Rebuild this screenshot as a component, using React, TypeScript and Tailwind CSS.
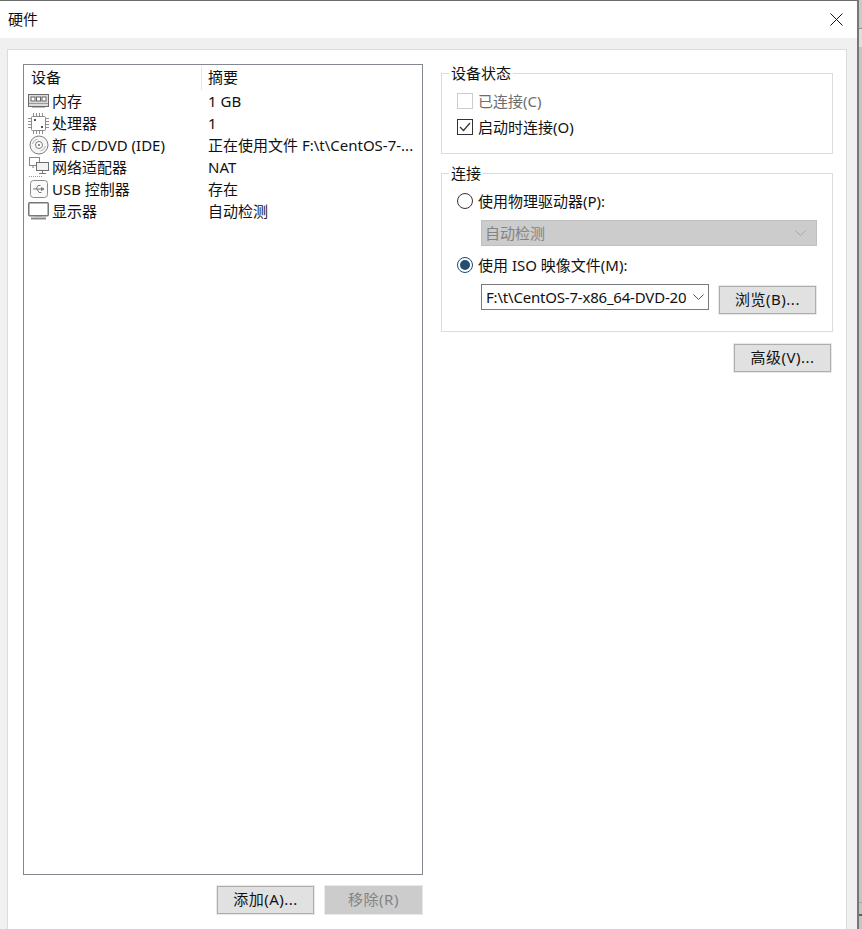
const font = "[font-family:'Noto_Sans','Noto_Sans_CJK_SC',sans-serif]";

function MemoryIcon() {
  return (
    <svg width="21" height="14" viewBox="0 0 21 14" fill="none">
      <rect x="0.5" y="0.5" width="20" height="12" fill="#dcdcdc" stroke="#6a6a6a" />
      <rect x="3" y="3" width="4" height="4" fill="#fff" stroke="#666" />
      <rect x="8.5" y="3" width="4" height="4" fill="#fff" stroke="#666" />
      <rect x="14" y="3" width="4" height="4" fill="#fff" stroke="#666" />
      <path d="M1 9.5h19" stroke="#9a9a9a" />
      <path d="M4 13.5h13" stroke="#bbb" />
    </svg>
  );
}

function CpuIcon() {
  return (
    <svg width="21" height="21" viewBox="0 0 21 21" fill="none">
      <rect x="3.5" y="3.5" width="14" height="14" rx="1" fill="#fff" stroke="#8a8a8a" />
      <path d="M5.5 0v3M8.5 0v3M11.5 0v3M14.5 0v3M5.5 18v3M8.5 18v3M11.5 18v3M14.5 18v3M0 5.5h3M0 8.5h3M0 11.5h3M0 14.5h3M18 5.5h3M18 8.5h3M18 11.5h3M18 14.5h3" stroke="#8f8f8f" />
      <rect x="6" y="6" width="2" height="2" fill="#555" />
      <rect x="13" y="13" width="2" height="2" fill="#555" />
    </svg>
  );
}

function DiscIcon() {
  return (
    <svg width="20" height="20" viewBox="0 0 20 20" fill="none">
      <circle cx="10" cy="10" r="9" fill="#f6f6f6" stroke="#7c7c7c" />
      <circle cx="10" cy="10" r="3.5" fill="#fff" stroke="#7c7c7c" />
      <circle cx="10" cy="10" r="1" fill="#666" />
      <path d="M3.5 9a6.5 6.5 0 0 1 5-5M16.5 11a6.5 6.5 0 0 1-5 5" stroke="#b5b5b5" />
    </svg>
  );
}

function NetworkIcon() {
  return (
    <svg width="21" height="20" viewBox="0 0 21 20" fill="none">
      <rect x="1.5" y="0.5" width="10" height="8" fill="#fff" stroke="#888" />
      <rect x="8.5" y="5.5" width="12" height="8" fill="#f2f2f2" stroke="#6f6f6f" />
      <path d="M14.5 14v2M11 16.5h7M5 9v2" stroke="#777" />
      <path d="M1 19.5h13" stroke="#999" strokeDasharray="1 1" />
    </svg>
  );
}

function UsbIcon() {
  return (
    <svg width="18" height="18" viewBox="0 0 18 18" fill="none">
      <rect x="0.5" y="0.5" width="17" height="17" rx="3" fill="#fafafa" stroke="#8a8a8a" />
      <path d="M3 9h11M14 9l-2.5-1.5v3zM6 9l2-3.5h2.5M7 9l2 3.5h2.5" stroke="#777" />
    </svg>
  );
}

function MonitorIcon() {
  return (
    <svg width="21" height="18" viewBox="0 0 21 18" fill="none">
      <rect x="0.75" y="0.75" width="19.5" height="13" rx="1" fill="#fff" stroke="#777" strokeWidth="1.5" />
      <path d="M3 16.5h15" stroke="#888" strokeWidth="2" />
      <path d="M7 14.5h7" stroke="#aaa" />
    </svg>
  );
}

const devices = [
  { icon: <MemoryIcon />, name: "内存", summary: "1 GB" },
  { icon: <CpuIcon />, name: "处理器", summary: "1" },
  { icon: <DiscIcon />, name: "新 CD/DVD (IDE)", summary: "正在使用文件 F:\\t\\CentOS-7-..." },
  { icon: <NetworkIcon />, name: "网络适配器", summary: "NAT" },
  { icon: <UsbIcon />, name: "USB 控制器", summary: "存在" },
  { icon: <MonitorIcon />, name: "显示器", summary: "自动检测" },
];

function Chevron({ color }: { color: string }) {
  return (
    <svg width="11" height="6" viewBox="0 0 11 6" fill="none">
      <path d="M0.5 0.5l5 5 5-5" stroke={color} />
    </svg>
  );
}

function Button({ label, disabled, className }: { label: string; disabled?: boolean; className: string }) {
  return (
    <div className={`h-[30px] w-[99px] bg-[#e9e9e9] p-[1px] ${className}`}>
      <div
        className={`flex h-full items-center justify-center border pb-[2px] tracking-[0.5px] ${
          disabled ? "border-[#cccccc] bg-[#cccccc] text-[#838383]" : "border-[#adadad] bg-[#e1e1e1] text-[#111]"
        }`}
      >
        {label}
      </div>
    </div>
  );
}

function Group({ title, className, children }: { title: string; className: string; children: React.ReactNode }) {
  return (
    <div className={`relative border border-[#dcdcdc] ${className}`}>
      <span className="absolute left-[7px] top-[-10px] bg-white px-[2px] leading-[18px]">{title}</span>
      {children}
    </div>
  );
}

export default function App() {
  return (
    <div className={`${font} flex h-[929px] w-[862px] overflow-hidden text-[15px] text-[#111]`}>
      <div className="w-[859px] shrink-0 border-r-2 border-[#777777] bg-white">
        <div className="flex h-[38px] items-center justify-between border-t border-[#6b6b6b] pl-2 pr-[14px]">
          <span>硬件</span>
          <svg width="13" height="13" viewBox="0 0 13 13" fill="none">
            <path d="M0.5 0.5l12 12M12.5 0.5l-12 12" stroke="#111" />
          </svg>
        </div>
        <div className="flex h-[891px] bg-[#f0f0f0] pl-[7px] pt-[11px]">
          <div className="flex h-[880px] w-[840px] border-x border-t border-[#dcdcdc] bg-white pl-[15px] pt-[14px]">
            <div className="w-[400px]">
              <div className="h-[811px] border border-[#828790]">
                <div className="flex h-[25px] items-center">
                  <div className="w-[177px] pl-[7px]">设备</div>
                  <div className="flex h-[24px] items-center border-l border-[#e5e5e5] pl-[6px]">摘要</div>
                </div>
                {devices.map((d) => (
                  <div key={d.name} className="flex h-[22px] items-center">
                    <div className="flex w-[177px] items-center">
                      <div className="flex w-[28px] shrink-0 justify-center pl-[1px]">{d.icon}</div>
                      <span className="whitespace-nowrap">{d.name}</span>
                    </div>
                    <div className="whitespace-nowrap pl-[7px]">{d.summary}</div>
                  </div>
                ))}
              </div>
              <div className="mt-[10px] flex justify-end gap-[9px]">
                <Button label="添加(A)..." className="" />
                <Button label="移除(R)" disabled className="" />
              </div>
            </div>
            <div className="ml-[18px] w-[392px] pt-[9px]">
              <Group title="设备状态" className="h-[81px] pt-[14px]">
                <div className="flex h-[26px] items-center pl-[15px] text-[#6d6d6d]">
                  <span className="mr-[5px] h-4 w-4 border border-[#cccccc]" />
                  已连接(C)
                </div>
                <div className="flex h-[26px] items-center pl-[15px]">
                  <span className="mr-[5px] flex h-4 w-4 items-center justify-center border border-[#333]">
                    <svg width="12" height="10" viewBox="0 0 12 10" fill="none">
                      <path d="M1 5l3.5 3.5L11 1" stroke="#333" strokeWidth="1.2" />
                    </svg>
                  </span>
                  启动时连接(O)
                </div>
              </Group>
              <Group title="连接" className="mt-[19px] h-[159px] pt-[14px]">
                <div className="flex h-[26px] items-center pl-[15px]">
                  <span className="mr-[5px] h-4 w-4 rounded-full border border-[#333]" />
                  使用物理驱动器(P):
                </div>
                <div className="ml-[39px] mt-[6px] flex h-[26px] w-[336px] items-center justify-between border border-[#bfbfbf] bg-[#cccccc] pl-[3px] pr-[5px] text-[#838383]">
                  自动检测
                  <span className="pr-[5px]"><Chevron color="#a8a8a8" /></span>
                </div>
                <div className="mt-[6px] flex h-[26px] items-center pl-[15px]">
                  <span className="mr-[5px] flex h-4 w-4 items-center justify-center rounded-full border border-[#1d4a70]">
                    <span className="h-[10px] w-[10px] rounded-full bg-[#234d72]" />
                  </span>
                  使用 ISO 映像文件(M):
                </div>
                <div className="ml-[39px] mt-[6px] flex items-start">
                  <div className="flex h-[26px] w-[228px] items-center justify-between border border-[#7a7a7a] pl-[4px] pr-[4px]">
                    <span className="whitespace-nowrap tracking-[-0.2px]">F:\t\CentOS-7-x86_64-DVD-20</span>
                    <Chevron color="#555" />
                  </div>
                  <Button label="浏览(B)..." className="ml-[9px] mt-[1px]" />
                </div>
              </Group>
              <div className="mt-[11px] flex justify-end pr-[1px]">
                <Button label="高级(V)..." className="" />
              </div>
            </div>
          </div>
        </div>
      </div>
      <div className="flex flex-1 flex-col bg-[#c4c4c4]">
        <div className="h-[29px] border-b border-[#8c8c8c] bg-[#c9c9c9]" />
        <div className="h-[18px] bg-[#dedede]" />
        <div className="h-[856px] border-b border-[#a8a8a8]" />
        <div className="h-[11px]" />
        <div className="h-[2px] bg-[#5f5f5f]" />
      </div>
    </div>
  );
}
